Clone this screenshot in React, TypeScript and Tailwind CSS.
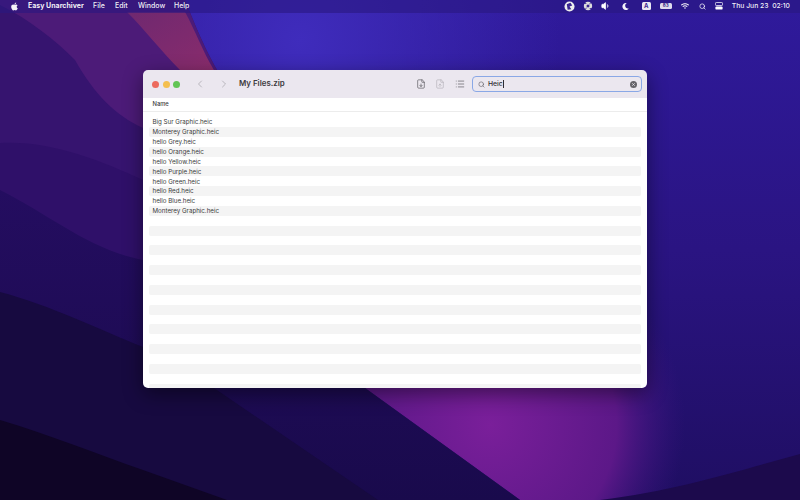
import { ChevronLeft, ChevronRight, FileDown, FileUp, List, Search, Volume1 } from "lucide-react";
import { FaApple, FaMoon, FaWifi } from "react-icons/fa";

const files = [
  "Big Sur Graphic.heic",
  "Monterey Graphic.heic",
  "hello Grey.heic",
  "hello Orange.heic",
  "hello Yellow.heic",
  "hello Purple.heic",
  "hello Green.heic",
  "hello Red.heic",
  "hello Blue.heic",
  "Monterey Graphic.heic",
];

const rows = Array.from({ length: 28 }, (_, i) => files[i] ?? "");

function Wallpaper() {
  return (
    <svg className="absolute inset-0 h-full w-full" viewBox="0 0 800 500" preserveAspectRatio="none">
      <defs>
        <linearGradient id="base" x1="0" y1="0" x2="0" y2="1">
          <stop offset="0" stopColor="#2f1a9c" />
          <stop offset="0.5" stopColor="#2a1482" />
          <stop offset="1" stopColor="#1f0e62" />
        </linearGradient>
        <radialGradient id="blue" gradientUnits="userSpaceOnUse" cx="300" cy="40" r="260">
          <stop offset="0" stopColor="#3f2cbc" />
          <stop offset="1" stopColor="#3f2cbc" stopOpacity="0" />
        </radialGradient>
        <radialGradient id="glow" gradientUnits="userSpaceOnUse" cx="490" cy="425" r="195">
          <stop offset="0" stopColor="#7a1f9a" />
          <stop offset="0.65" stopColor="#5c1888" />
          <stop offset="1" stopColor="#3a1480" stopOpacity="0" />
        </radialGradient>
        <linearGradient id="band" gradientUnits="userSpaceOnUse" x1="0" y1="190" x2="0" y2="500">
          <stop offset="0" stopColor="#240d60" />
          <stop offset="1" stopColor="#190a4c" />
        </linearGradient>
        <linearGradient id="wedge" x1="0" y1="0" x2="1" y2="1">
          <stop offset="0" stopColor="#6f2870" />
          <stop offset="1" stopColor="#8a2c6c" />
        </linearGradient>
      </defs>
      <rect width="800" height="500" fill="url(#base)" />
      <rect width="800" height="500" fill="url(#blue)" />
      <rect width="800" height="500" fill="url(#glow)" />
      <path d="M0 0H185C195 25 205 50 220 75L300 200L365 388L520 500H0Z" fill="#36146f" />
      <path d="M0 5C30 20 55 40 75 60C95 95 115 115 143 128H300L220 75C205 50 195 25 185 0H0Z" fill="#4c1b78" />
      <path d="M127 12H185C195 30 202 50 215 72L180 70C160 50 145 30 127 12Z" fill="url(#wedge)" />
      <path d="M0 143C50 140 100 160 143 180L300 250L365 388L520 500H0Z" fill="#2f1069" />
      <path d="M0 190C50 215 90 250 143 260L240 300L365 388L520 500H0Z" fill="url(#band)" />
      <path d="M0 292C50 305 100 330 143 347L214 388L378 500H0Z" fill="#170a40" />
      <path d="M0 420C50 435 100 455 143 470L227 500H0Z" fill="#0f0526" />
      <path d="M600 500C680 490 740 470 800 454V500Z" fill="#1c0a4c" />
    </svg>
  );
}

function MenuBar() {
  return (
    <div className="relative flex h-[12.5px] items-center justify-between bg-[#2a1880]/60 text-[7px] font-medium text-white/95">
      <div className="flex items-center">
        <FaApple className="ml-[10px] h-[9px] w-[9px]" />
        <span className="ml-[9px] w-[65px] font-bold">Easy Unarchiver</span>
        <span className="w-[22px]">File</span>
        <span className="w-[23px]">Edit</span>
        <span className="w-[36px]">Window</span>
        <span>Help</span>
      </div>
      <div className="flex items-center">
        <svg className="h-[11px] w-[11px]" viewBox="0 0 12 12">
          <circle cx="6" cy="6" r="5.5" fill="#eee" />
          <path d="M3 3.5 7 2 9 5 6 6 8 9 4 9.5Z" fill="#3a2590" />
        </svg>
        <svg className="ml-[8px] h-[10px] w-[10px]" viewBox="0 0 12 12">
          <circle cx="6" cy="6" r="5" fill="#ddd" />
          <circle cx="6" cy="6" r="1.8" fill="#3a2590" />
          <path d="M1 3h3M8 9h3M3 10l1-2M8 4l1-2" stroke="#3a2590" strokeWidth="1" />
        </svg>
        <Volume1 className="ml-[8px] h-[10px] w-[10px]" fill="white" strokeWidth={2} />
        <FaMoon className="ml-[11px] h-[7px] w-[7px]" />
        <span className="ml-[13px] flex h-[8px] w-[9px] items-center justify-center rounded-[1.5px] bg-white/90 text-[6px] font-bold leading-none text-[#3a2590]">
          A
        </span>
        <span className="ml-[9px] flex h-[6px] w-[12px] items-center justify-center rounded-[1.5px] bg-white/85 text-[4.5px] font-bold leading-none text-[#2e1a80]">
          83
        </span>
        <FaWifi className="ml-[9px] h-[8px] w-[8px]" />
        <Search className="ml-[10px] h-[7px] w-[7px]" strokeWidth={2.5} />
        <svg className="ml-[9px] h-[8px] w-[8px]" viewBox="0 0 10 10">
          <rect x="0.5" y="0.5" width="9" height="4" rx="1.5" fill="none" stroke="white" />
          <rect x="0.5" y="5.5" width="9" height="4" rx="1.5" fill="white" />
        </svg>
        <span className="ml-[9px] mr-[10px] whitespace-pre text-[6.8px]">Thu Jun 23  02:10</span>
      </div>
    </div>
  );
}

function Toolbar() {
  return (
    <div className="flex h-[28px] items-center bg-[#ebe7ef] pl-[9px] pr-[5px]">
      <span className="h-[7px] w-[7px] rounded-full bg-[#ec6a5e]" />
      <span className="ml-[3.5px] h-[7px] w-[7px] rounded-full bg-[#f4bf4f]" />
      <span className="ml-[3.5px] h-[7px] w-[7px] rounded-full bg-[#61c554]" />
      <ChevronLeft className="ml-[14px] h-[12px] w-[12px] text-[#a8a5ac]" strokeWidth={1.5} />
      <ChevronRight className="ml-[12px] h-[12px] w-[12px] text-[#a8a5ac]" strokeWidth={1.5} />
      <span className="ml-[9px] text-[7.9px] font-semibold text-[#3c3a40]">My Files.zip</span>
      <div className="ml-auto flex items-center">
        <FileDown className="h-[10px] w-[10px] text-[#58565c]" strokeWidth={1.6} />
        <FileUp className="ml-[9px] h-[10px] w-[10px] text-[#b5b2b9]" strokeWidth={1.6} />
        <List className="ml-[10px] h-[10px] w-[10px] text-[#58565c]" strokeWidth={1.6} />
        <div className="ml-[7px] flex h-[16px] w-[170px] items-center rounded-[4px] border-[1.5px] border-[#8aa8e6] pl-[5px] pr-[4px]">
          <Search className="h-[7px] w-[7px] text-[#5c5a60]" strokeWidth={2} />
          <span className="ml-[3px] text-[6.8px] font-medium text-[#2e2c32]">Heic</span>
          <span className="h-[8px] w-px bg-[#2e2c32]" />
          <svg className="ml-auto h-[7px] w-[7px]" viewBox="0 0 10 10">
            <circle cx="5" cy="5" r="5" fill="#66646a" />
            <path d="M3.3 3.3 6.7 6.7M6.7 3.3 3.3 6.7" stroke="#ebe7ef" strokeWidth="1.2" />
          </svg>
        </div>
      </div>
    </div>
  );
}

function FileList() {
  return (
    <div className="h-[290px] overflow-hidden bg-white">
      <div className="flex h-[13.5px] items-center border-b border-[#ececec] pl-[9.5px] text-[5.8px] font-medium text-[#3c3c3c]">
        Name
      </div>
      <div className="px-[6px] pt-[5.5px]">
        {rows.map((name, i) => (
          <div
            key={i}
            className={
              i % 2 === 1
                ? "flex h-[9.875px] items-center rounded-[2px] bg-[#f4f4f4] pl-[3.5px] text-[6.2px] text-[#3a3a3a]"
                : "flex h-[9.875px] items-center pl-[3.5px] text-[6.2px] text-[#3a3a3a]"
            }
          >
            {name}
          </div>
        ))}
      </div>
    </div>
  );
}

export default function App() {
  return (
    <div className="relative h-[500px] w-[800px] overflow-hidden font-['Inter',sans-serif]">
      <Wallpaper />
      <MenuBar />
      <div className="relative ml-[143px] mt-[57.5px] w-[504px] overflow-hidden rounded-[5px] shadow-[0_6px_20px_rgba(0,0,0,0.45)]">
        <Toolbar />
        <FileList />
      </div>
    </div>
  );
}
